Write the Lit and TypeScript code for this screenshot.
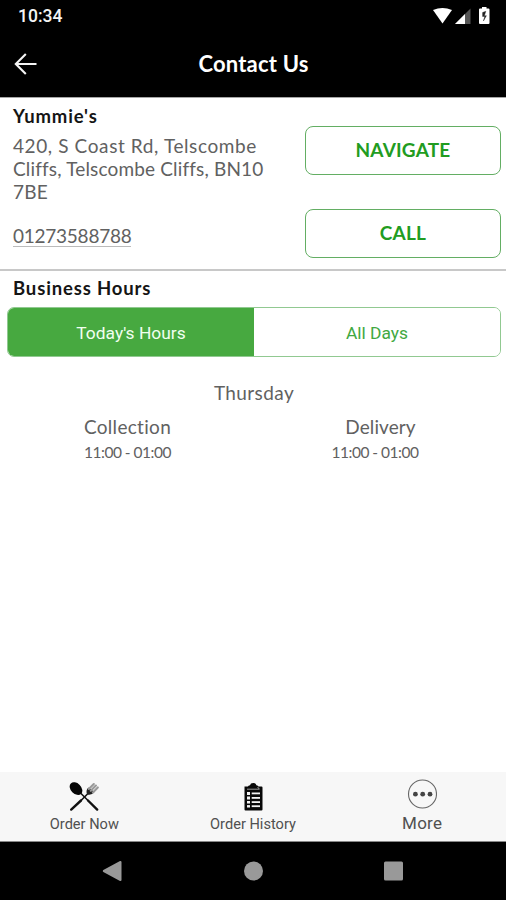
import { LitElement, html, css, svg } from "lit";
import { customElement, property, state } from "lit/decorators.js";
import { classMap } from "lit/directives/class-map.js";

@customElement("status-bar")
class StatusBar extends LitElement {
  static styles = css`
    :host { display: flex; height: 32px; padding: 0 15px 0 18px; align-items: center; justify-content: space-between; background: #000; color: #f4f4f4; box-sizing: border-box; }
    .time { font: 500 17.5px/32px Roboto, sans-serif; }
    svg { display: block; }
  `;
  render() {
    return html`
      <span class="time">10:34</span>
      <svg width="59" height="20" viewBox="0 0 59 20">
        <path d="M1 4Q10.5 0 20 4L10.5 17.5Z" fill="#fff" />
        <path d="M23 18L38.5 2.5V18Z" fill="#555" />
        <path d="M23 18L33 8V18Z" fill="#fff" />
        <path d="M50 1H54.5V2.5H56.5Q57.5 2.5 57.5 3.5V17Q57.5 18 56.5 18H48Q47 18 47 17V3.5Q47 2.5 48 2.5H50Z" fill="#fff" />
        <path d="M53.8 5.3L50.6 6.5V10.5H52.8L51.4 15L54.4 9.7H52.4Z" fill="#222" stroke="#222" stroke-width="0.4" />
      </svg>
    `;
  }
}

@customElement("title-bar")
class TitleBar extends LitElement {
  @property() heading = "";
  static styles = css`
    :host { display: grid; grid-template-columns: 52px 1fr 51px; height: 66px; padding-bottom: 2px; align-items: center; background: #000; border-bottom: 1px solid #a6a6a6; box-sizing: border-box; }
    svg { display: block; margin-left: 14px; }
    h1 { margin: 0; font: 700 22px/30px Lato, sans-serif; letter-spacing: 0.2px; color: #fff; text-align: center; }
  `;
  render() {
    return html`
      <svg width="24" height="22" viewBox="0 0 24 22" fill="none" stroke="#f4f4f4" stroke-width="2.1">
        <path d="M11.8 1L1.8 11L11.8 21M2 11H22.5" />
      </svg>
      <h1>${this.heading}</h1>
    `;
  }
}

const icons = {
  cutlery: svg`
    <g fill="none" stroke="#111" stroke-linecap="round">
      <path d="M9 8.5L19 18.5" stroke-width="1.6" />
      <path d="M19 18.5L28.2 27.6" stroke-width="2.4" />
      <path d="M20.5 10L12 18.5" stroke-width="1.6" />
      <path d="M12 18.5L2.2 27.6" stroke-width="2.4" />
    </g>
    <ellipse cx="7" cy="6.6" rx="7.3" ry="5.2" transform="rotate(45 7 6.6)" fill="#050505" />
    <path d="M18.2 12.4Q16.3 8.5 19.4 5.6L25.4 10Q22 14 18.2 12.4Z" fill="#222" />
    <path d="M19.8 7L24.8 2M21.8 8.8L26.9 3.5M23.9 10.4L28.8 5.4" stroke="#999" stroke-width="2.1" stroke-linecap="round" />`,
  clipboard: svg`
    <path d="M6.5 4.5H10Q10 3.4 12 3.2Q12.4 1 15.2 1Q18 1 18.4 3.2Q20.4 3.4 20.4 4.5H23.5Q24.5 4.5 24.5 5.5V27.5Q24.5 28.5 23.5 28.5H7.5Q6.5 28.5 6.5 27.5Z" fill="#080808" />
    <path d="M9 7.2H21.4L19.6 5" fill="none" stroke="#aaa" stroke-width="0.9" />
    <g fill="#f3f3f3">
      <rect x="9" y="10" width="3" height="3" /><rect x="13.7" y="10.5" width="8.3" height="1.8" />
      <rect x="9" y="14.5" width="3" height="3" /><rect x="13.7" y="15" width="8.3" height="1.8" />
      <rect x="9" y="19" width="3" height="2.5" /><rect x="13.7" y="19.2" width="8.3" height="1.8" />
      <rect x="9" y="23.1" width="3" height="2.4" /><rect x="13.7" y="23.3" width="8.3" height="1.8" />
    </g>`,
  more: svg`
    <circle cx="15.5" cy="15" r="14" fill="none" stroke="#666" stroke-width="1.1" />
    <g fill="#444"><circle cx="8.4" cy="15.2" r="2.4" /><circle cx="15.7" cy="15.2" r="2.4" /><circle cx="23" cy="15.2" r="2.4" /></g>`,
};

@customElement("bottom-nav")
class BottomNav extends LitElement {
  static styles = css`
    :host { display: grid; grid-template-columns: repeat(3, 1fr); height: 70px; background: #f7f7f7; border-bottom: 1px solid #888; box-sizing: border-box; }
    .item { display: flex; flex-direction: column; align-items: center; color: #505050; font: 400 14.6px/20px Roboto, sans-serif; padding-top: 10px; }
    .item.large { font-size: 17px; letter-spacing: 0.3px; padding-top: 7px; }
    .label { padding-top: 2px; }
    .large .label { padding: 4px 0 0 1px; }
    svg { display: block; }
  `;
  render() {
    return html`
      <div class="item"><svg width="30" height="30" viewBox="0 0 30 30">${icons.cutlery}</svg><span class="label">Order Now</span></div>
      <div class="item"><svg width="30" height="30" viewBox="0 0 30 30">${icons.clipboard}</svg><span class="label">Order History</span></div>
      <div class="item large"><svg width="30" height="30" viewBox="0 0 30 30">${icons.more}</svg><span class="label">More</span></div>
    `;
  }
}

@customElement("system-nav")
class SystemNav extends LitElement {
  static styles = css`
    :host { display: flex; height: 58px; background: #000; justify-content: center; align-items: center; gap: 119px; }
    svg { display: block; }
  `;
  render() {
    return html`
      <svg width="21" height="22" viewBox="0 0 21 22"><path d="M1.8 11L18.5 2V20Z" fill="#999" stroke="#999" stroke-width="2" stroke-linejoin="round" /></svg>
      <svg width="22" height="22" viewBox="0 0 22 22"><circle cx="11.5" cy="11" r="9.5" fill="#999" /></svg>
      <svg width="21" height="22" viewBox="0 0 21 22"><rect x="1" y="1.5" width="19" height="19" rx="1.5" fill="#999" /></svg>
    `;
  }
}

@customElement("app-root")
class AppRoot extends LitElement {
  @state() private tab = 0;

  static styles = css`
    :host { display: flex; flex-direction: column; width: 506px; height: 900px; background: #fff; color: #616161; font-family: Lato, sans-serif; overflow: hidden; }
    h2 { margin: 0; font: 700 18.5px/24px Lato, sans-serif; letter-spacing: 0.85px; color: #151515; }
    .contact { display: flex; justify-content: space-between; height: 173px; padding: 6px 5px 0 13px; border-bottom: 2px solid #c8c8c8; box-sizing: border-box; }
    .address { margin: 6px 0 0; width: 270px; font-size: 19px; line-height: 23px; }
    .address span { display: block; letter-spacing: 0.2px; }
    .address .street { letter-spacing: 0.6px; }
    .address .town { letter-spacing: 0.16px; }
    .phone { display: inline-block; margin-top: 23px; font-size: 19px; line-height: 20px; letter-spacing: -0.25px; color: #616161; text-decoration: none; border-bottom: 1px solid #bbb; }
    .actions { display: flex; flex-direction: column; gap: 34px; padding-top: 22px; }
    .actions button { width: 196px; height: 49px; padding: 0 0 2px; border: 1.5px solid #63ae63; border-radius: 8px; background: #fff; color: #219c21; font: 700 19px/24px Lato, sans-serif; letter-spacing: 0.2px; }
    .hours { flex: 1; padding: 5px 5px 0 7px; }
    .hours h2 { padding-left: 6px; }
    .tabs { display: grid; grid-template-columns: 1fr 1fr; height: 50px; margin-top: 7px; border: 1px solid #91c991; border-radius: 7px; overflow: hidden; box-sizing: border-box; }
    .tab { border: 0; padding: 1px 0 0; background: #fff; color: #41a841; font: 400 17.4px/24px Roboto, sans-serif; }
    .tab.active { background: #47a940; color: #f0fff0; }
    .day { margin-top: 24px; text-align: center; font-size: 19px; line-height: 24px; letter-spacing: 0.4px; }
    .slots { display: grid; grid-template-columns: 1fr 1fr; margin-top: 10px; text-align: center; }
    .kind { font-size: 19px; line-height: 24px; letter-spacing: 0.3px; }
    .range { margin-top: 2px; font-size: 15.5px; line-height: 22px; letter-spacing: -0.5px; }
    .slot:first-child { padding-right: 6px; }
    .slot:last-child .kind { padding-left: 6px; letter-spacing: 0.1px; }
    .slot:last-child .range { padding-right: 5px; }
  `;

  private tabButton(label: string, index: number) {
    return html`<button class=${classMap({ tab: true, active: this.tab === index })} @click=${() => (this.tab = index)}>${label}</button>`;
  }

  render() {
    return html`
      <status-bar></status-bar>
      <title-bar heading="Contact Us"></title-bar>
      <section class="contact">
        <div>
          <h2>Yummie's</h2>
          <p class="address">
            <span class="street">420, S Coast Rd, Telscombe</span>
            <span class="town">Cliffs, Telscombe Cliffs, BN10</span>
            <span>7BE</span>
          </p>
          <a class="phone">01273588788</a>
        </div>
        <div class="actions"><button>NAVIGATE</button><button>CALL</button></div>
      </section>
      <section class="hours">
        <h2>Business Hours</h2>
        <div class="tabs">${this.tabButton("Today's Hours", 0)}${this.tabButton("All Days", 1)}</div>
        <div class="day">Thursday</div>
        <div class="slots">
          <div class="slot"><div class="kind">Collection</div><div class="range">11:00 - 01:00</div></div>
          <div class="slot"><div class="kind">Delivery</div><div class="range">11:00 - 01:00</div></div>
        </div>
      </section>
      <bottom-nav></bottom-nav>
      <system-nav></system-nav>
    `;
  }
}
